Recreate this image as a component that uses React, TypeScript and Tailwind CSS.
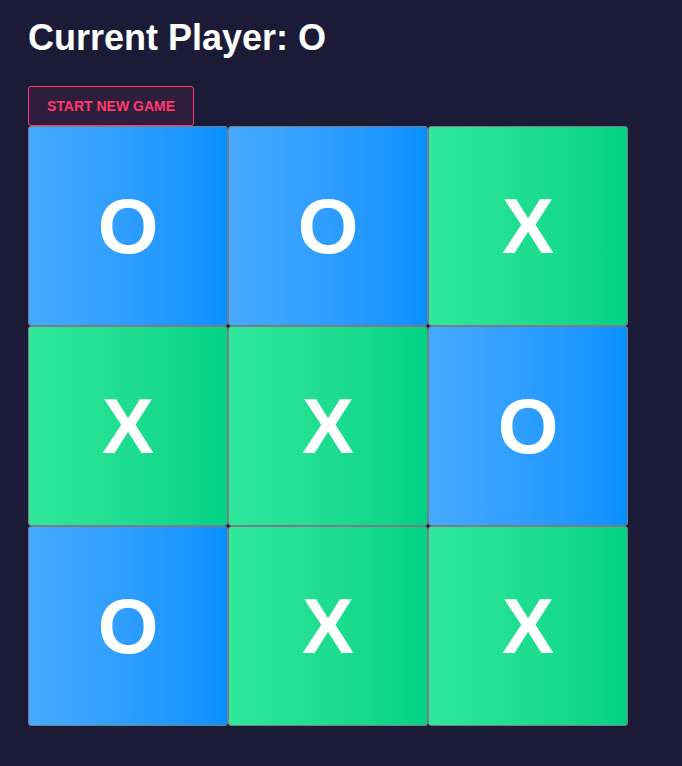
const board = ["O", "O", "X", "X", "X", "O", "O", "X", "X"];

function Cell({ value }: { value: string }) {
  const bg =
    value === "O"
      ? "bg-gradient-to-r from-[#45aaff] to-[#0690ff]"
      : "bg-gradient-to-r from-[#2fe89b] to-[#00d284]";
  return (
    <div
      className={`flex h-[200px] w-[200px] items-center justify-center rounded-[3px] border border-[#7c7c84] ${bg}`}
    >
      <span className="text-[78px] font-bold leading-none text-white">{value}</span>
    </div>
  );
}

export default function App() {
  return (
    <main
      className="min-h-[766px] bg-[#1c1b37] px-[28px] pt-[18px]"
      style={{ fontFamily: '"Liberation Sans", Arial, sans-serif' }}
    >
      <h1 className="text-[36px] font-bold leading-[40px] text-white">Current Player: O</h1>
      <button className="mt-[28px] h-[40px] rounded-[3px] border border-[#ff3a6c] bg-[#2e1d3d] px-[18px] text-[14px] font-bold text-[#ff3a6c]">
        START NEW GAME
      </button>
      <div className="grid w-[600px] grid-cols-3">
        {board.map((v, i) => (
          <Cell key={i} value={v} />
        ))}
      </div>
    </main>
  );
}
